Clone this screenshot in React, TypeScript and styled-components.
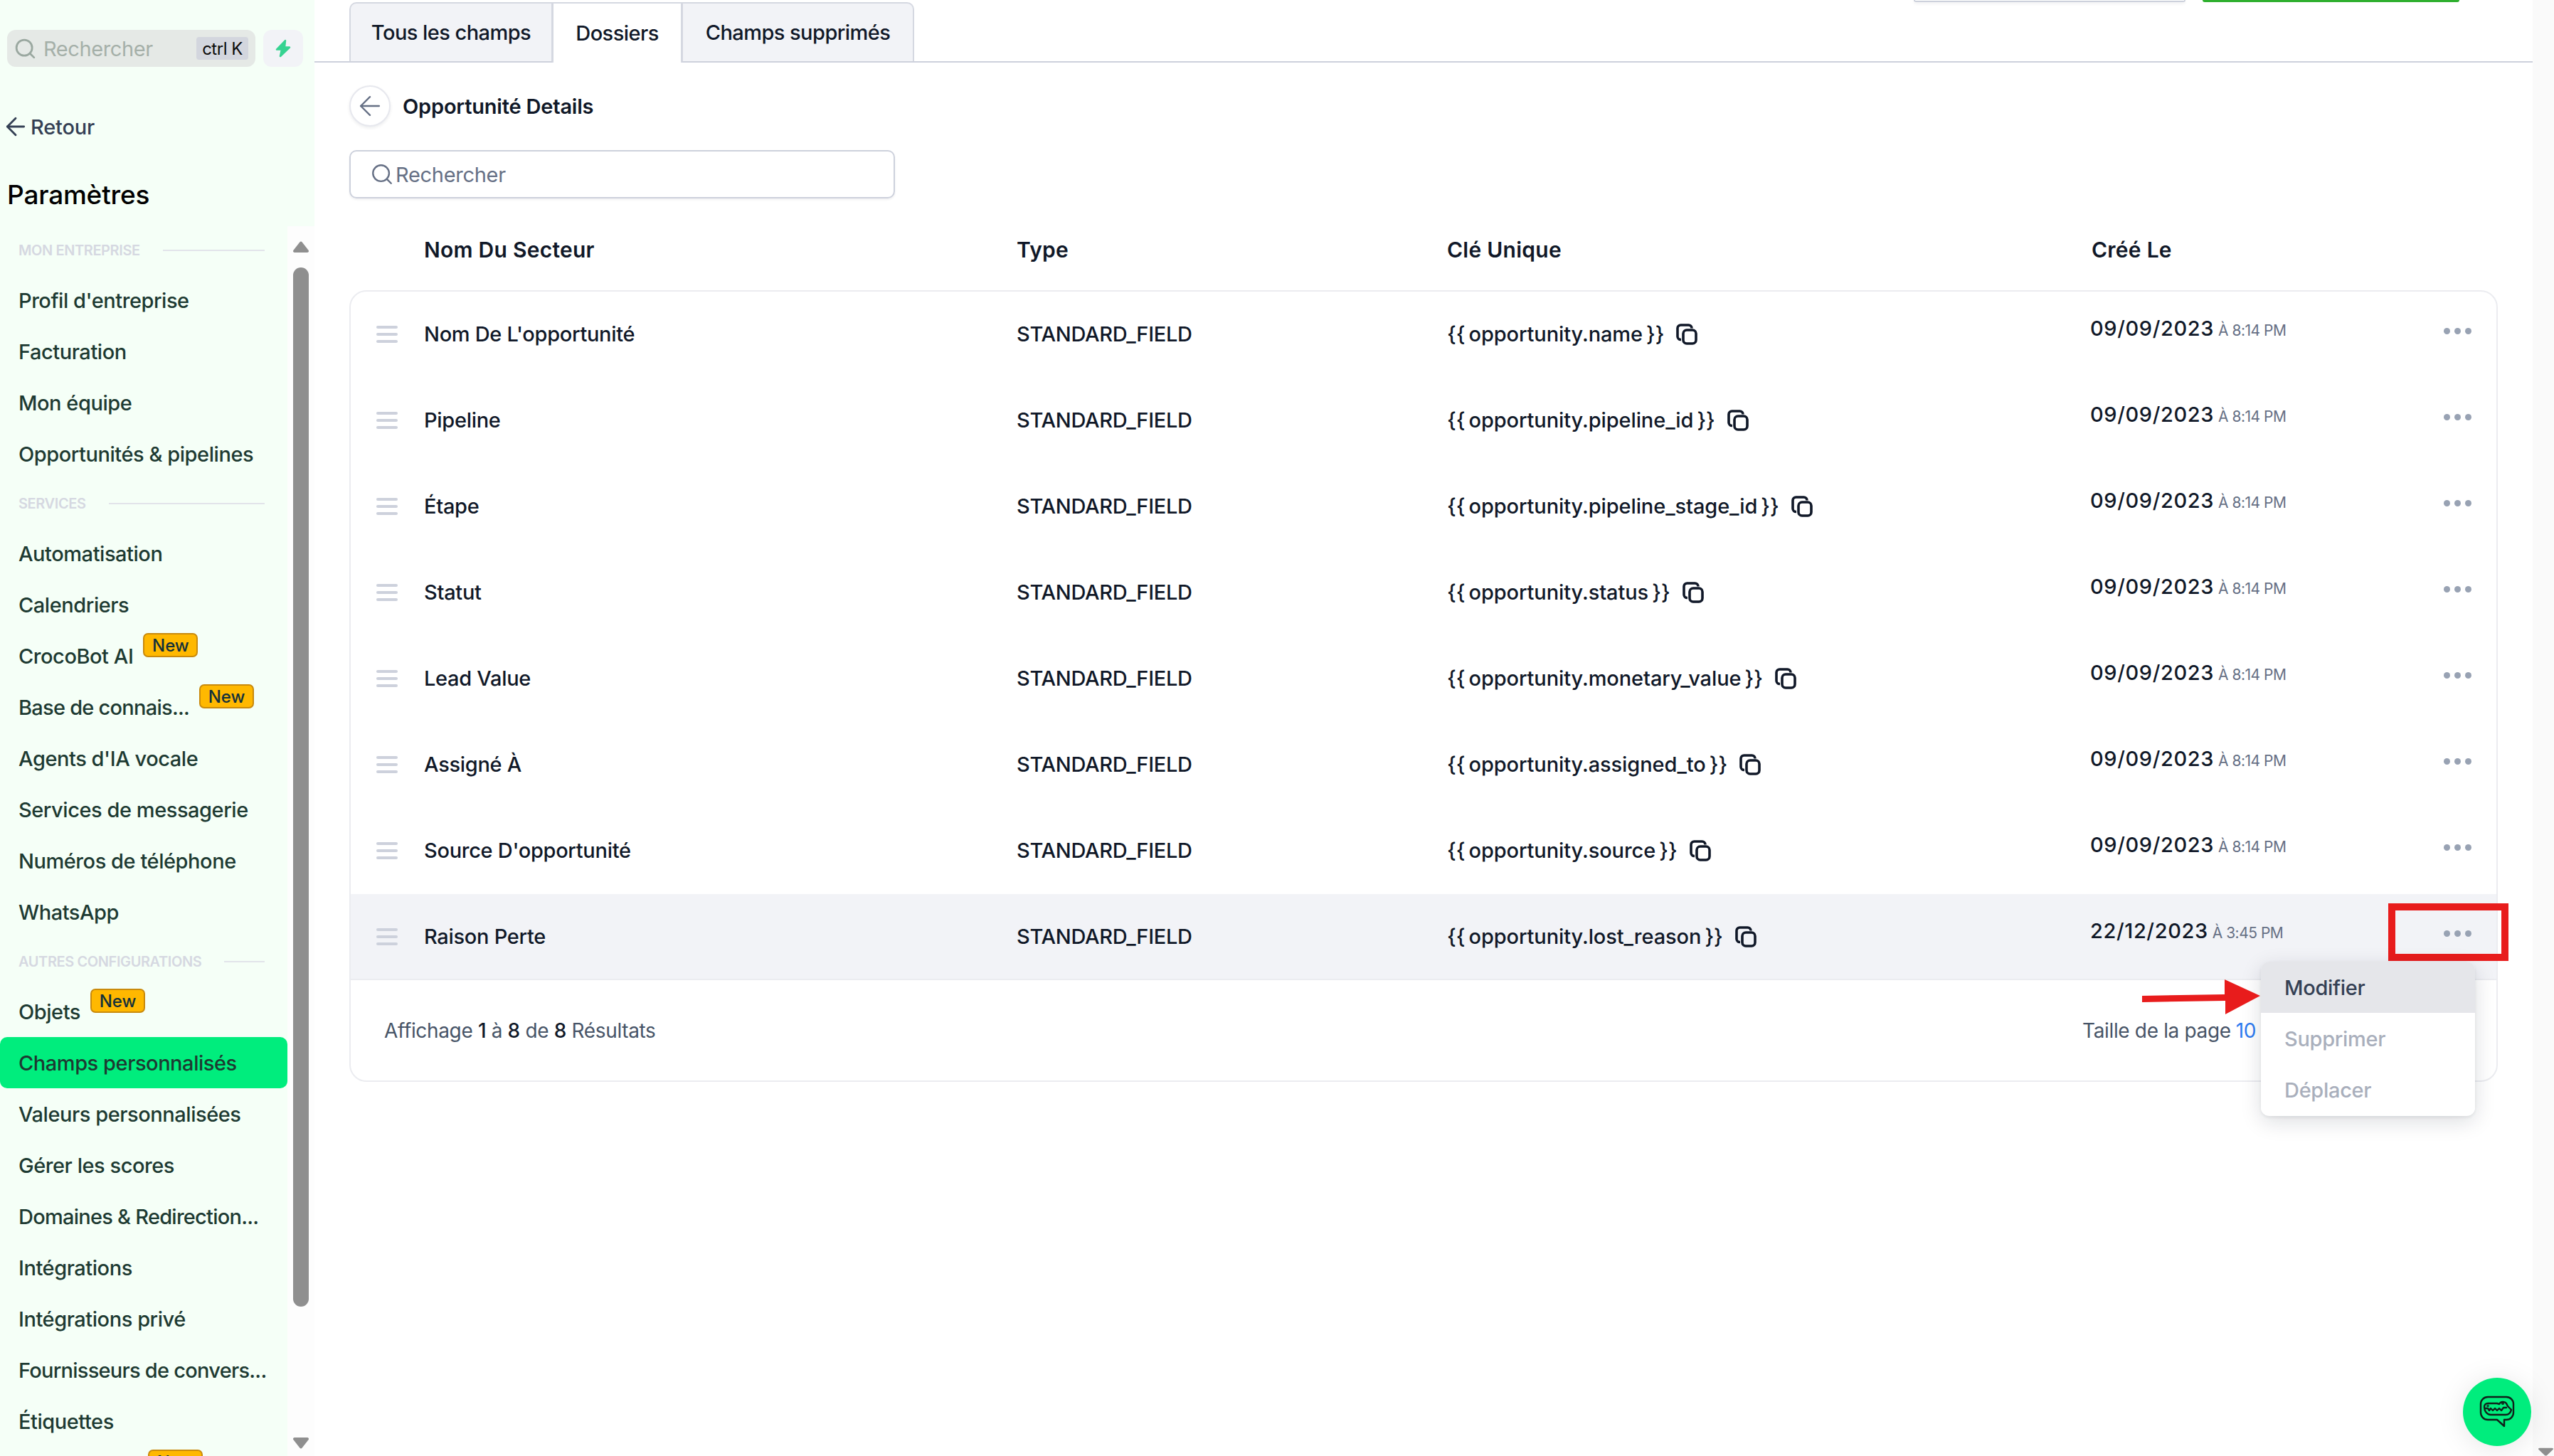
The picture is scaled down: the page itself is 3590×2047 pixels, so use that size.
import React from "react";
import styled, { createGlobalStyle, css } from "styled-components";
import { ArrowLeft, ChevronDown, Search } from "lucide-react";

const FONT = `"Inter", "Noto Sans", sans-serif`;

const GlobalStyle = createGlobalStyle`
  html, body {
    margin: 0;
    padding: 0;
    background: #fff;
    font-family: ${FONT};
  }
  * { box-sizing: border-box; }
`;

const Page = styled.div`
  width: 3590px;
  height: 2047px;
  display: flex;
  overflow: hidden;
  position: relative;
  background: #fff;
`;

const Sidebar = styled.aside`
  width: 442px;
  flex: none;
  height: 100%;
  display: flex;
  flex-direction: column;
  background: #f5fff7;
`;

const SideTop = styled.div`
  height: 318px;
  flex: none;
  padding: 42px 16px 0 10px;
`;

const SearchRow = styled.div`
  display: flex;
  gap: 11px;
`;

const SideSearch = styled.div`
  width: 349px;
  height: 52px;
  display: flex;
  align-items: center;
  padding: 0 10px 0 9px;
  background: #e5e9e6;
  border-radius: 12px;
  color: #a5b0a9;
  font-size: 29px;
`;

const SideSearchLabel = styled.span`
  margin-left: 9px;
  flex: 1;
  letter-spacing: -0.4px;
`;

const Kbd = styled.span`
  width: 73px;
  height: 32px;
  display: flex;
  align-items: center;
  justify-content: center;
  background: #d3d6de;
  border-radius: 4px;
  color: #0b0b0b;
  font-size: 24px;
  letter-spacing: -0.5px;
`;

const BoltButton = styled.div`
  width: 56px;
  height: 52px;
  display: flex;
  align-items: center;
  justify-content: center;
  background: #f2f3f7;
  border-radius: 12px;
`;

const BackLink = styled.div`
  margin: 66px 0 0 -8px;
  height: 36px;
  display: flex;
  align-items: center;
  gap: 1px;
  color: #344054;
  font-size: 29px;
  font-weight: 500;
  letter-spacing: -0.2px;
`;

const SideTitle = styled.h1`
  margin: 54px 0 0;
  height: 48px;
  line-height: 48px;
  font-size: 37px;
  font-weight: 500;
  color: #000;
  letter-spacing: -0.2px;
`;

const NavWrap = styled.div`
  flex: 1;
  min-height: 0;
  display: flex;
`;

const NavList = styled.nav`
  width: 404px;
  flex: none;
  display: flex;
  flex-direction: column;
`;

const SectionLabel = styled.div`
  height: 68px;
  flex: none;
  display: flex;
  align-items: center;
  gap: 32px;
  padding: 0 32px 0 26px;
  color: #d5d8e1;
  font-size: 20px;
  font-weight: 600;
  letter-spacing: -0.4px;
  text-transform: uppercase;
  white-space: nowrap;

  &::after {
    content: "";
    flex: 1;
    height: 2px;
    background: #e2e4ea;
  }
`;

const NavItem = styled.div<{ $active?: boolean }>`
  height: 72px;
  flex: none;
  display: flex;
  align-items: center;
  padding-left: 26px;
  border-radius: 10px;
  color: #1d3a32;
  font-size: 29px;
  font-weight: 500;
  letter-spacing: -0.45px;
  white-space: nowrap;
  background: ${({ $active }) => ($active ? "#00ed7d" : "transparent")};
`;

const NavText = styled.span<{ $tight?: boolean }>`
  letter-spacing: ${({ $tight }) => ($tight ? "-0.75px" : "inherit")};
`;

const NewBadge = styled.span`
  flex: none;
  width: 77px;
  height: 34px;
  margin-left: 14px;
  margin-bottom: 30px;
  display: flex;
  align-items: center;
  justify-content: center;
  background: #ffb800;
  border: 2px solid #c98a0c;
  border-radius: 7px;
  color: #12303a;
  font-size: 24px;
  font-weight: 500;
  letter-spacing: 0;
`;

const Track = styled.div`
  flex: 1;
  display: flex;
  flex-direction: column;
  align-items: center;
  background: #fdfdfd;
  padding: 21px 0 10px;
`;

const Thumb = styled.div`
  width: 22px;
  height: 1461px;
  margin-top: 20px;
  border-radius: 11px;
  background: #8f8f8f;
`;

const Spacer = styled.div`
  flex: 1;
`;

const Main = styled.main`
  flex: 1;
  min-width: 0;
  display: flex;
  flex-direction: column;
`;

const TopBar = styled.div`
  height: 88px;
  flex: none;
  display: flex;
  align-items: flex-start;
  padding-left: 49px;
  border-bottom: 2px solid #cdd1dc;
`;

const Tabs = styled.div`
  display: flex;
  margin-top: 3px;
  height: 85px;
`;

const Tab = styled.div<{ $active?: boolean; $w: number }>`
  width: ${({ $w }) => $w}px;
  height: ${({ $active }) => ($active ? "85px" : "83px")};
  display: flex;
  align-items: center;
  justify-content: center;
  border: 2px solid #d5d8e1;
  border-bottom: none;
  margin-left: ${({ $active }) => ($active ? "-1px" : "0")};
  margin-right: ${({ $active }) => ($active ? "-1px" : "0")};
  position: relative;
  z-index: ${({ $active }) => ($active ? 1 : 0)};
  background: ${({ $active }) => ($active ? "#fff" : "#f2f3f7")};
  color: #101828;
  font-size: 29px;
  font-weight: 500;
  letter-spacing: -0.55px;

  &:first-child {
    border-top-left-radius: 10px;
  }
  &:last-child {
    border-top-right-radius: 10px;
  }
`;

const TopActions = styled.div`
  margin-left: auto;
  margin-right: 103px;
  display: flex;
  gap: 24px;
`;

const GhostEdge = styled.div`
  width: 382px;
  height: 3px;
  background: #fff;
  border: 2px solid #cdd1dc;
  border-top: none;
  border-radius: 0 0 6px 6px;
  box-shadow: 0 2px 4px rgba(16, 24, 40, 0.08);
`;

const GreenEdge = styled.div`
  width: 361px;
  height: 3px;
  background: #2eaf2e;
  border-radius: 0 0 6px 6px;
`;

const Content = styled.div`
  flex: 1;
  padding: 32px 49px 0;
`;

const TitleRow = styled.div`
  display: flex;
  align-items: center;
  gap: 17px;
  height: 58px;
`;

const RoundBack = styled.div`
  width: 58px;
  height: 58px;
  display: flex;
  align-items: center;
  justify-content: center;
  border: 2px solid #e7e8ee;
  border-radius: 50%;
  background: #fff;
  color: #667085;
  box-shadow: 0 2px 4px rgba(16, 24, 40, 0.08);
`;

const PageTitle = styled.div`
  color: #101828;
  font-size: 29px;
  font-weight: 600;
  letter-spacing: -0.2px;
`;

const SearchInput = styled.div`
  width: 767px;
  height: 68px;
  margin-top: 33px;
  display: flex;
  align-items: center;
  gap: 2px;
  padding-left: 27px;
  border: 2px solid #cdd1dc;
  border-radius: 10px;
  color: #667085;
  font-size: 29px;
  box-shadow: 0 2px 3px rgba(16, 24, 40, 0.06);
  letter-spacing: -0.3px;
`;

const columns = css`
  display: grid;
  grid-template-columns: 103px 833px 605px 906px 495px 75px;
  align-items: center;
`;

const HeadRow = styled.div`
  ${columns}
  height: 68px;
  margin: 38px 2px 23px;
  color: #101828;
  font-size: 30px;
  font-weight: 600;
  letter-spacing: 0.25px;
`;

const Card = styled.div`
  width: 3020px;
  height: 1113px;
  border: 2px solid #ebecf0;
  border-radius: 24px;
`;

const Row = styled.div<{ $selected?: boolean }>`
  ${columns}
  position: relative;
  height: 121px;
  color: #101828;
  font-size: 29px;
  font-weight: 500;
  letter-spacing: -0.3px;
  background: ${({ $selected }) => ($selected ? "#f2f3f7" : "transparent")};
  border-bottom: 2px solid ${({ $selected }) => ($selected ? "#ebecf0" : "transparent")};
`;

const DragCell = styled.div`
  padding-left: 36px;
  display: flex;
`;

const DragHandle = styled.div`
  width: 30px;
  height: 24px;
  display: flex;
  flex-direction: column;
  justify-content: space-between;

  span {
    height: 4px;
    border-radius: 2px;
    background: #cdd1dc;
  }
`;

const KeyCell = styled.div`
  display: flex;
  align-items: center;
  gap: 17px;
  letter-spacing: -0.1px;
  word-spacing: -2.5px;
`;

const DateCell = styled.div`
  display: flex;
  align-items: baseline;
  gap: 6px;
  margin-top: -16px;
  margin-left: -2px;
  letter-spacing: 0.6px;
`;

const TimeText = styled.span`
  color: #667085;
  font-size: 21px;
  font-weight: 400;
  letter-spacing: -0.5px;
`;

const Dots = styled.div`
  display: flex;
  gap: 6px;
  margin-top: -8px;

  span {
    width: 9px;
    height: 9px;
    border-radius: 50%;
    background: #98a2b3;
  }
`;

const Footer = styled.div`
  height: 140px;
  display: flex;
  align-items: center;
  justify-content: space-between;
  padding: 2px 0 0 47px;
  color: #475467;
  font-size: 28px;
  letter-spacing: -0.35px;

  b {
    color: #101828;
    font-weight: 500;
  }
`;

const PageSize = styled.div`
  width: 582px;
  display: flex;
  align-items: center;
  gap: 7px;
`;

const PageSizeValue = styled.span`
  color: #2e7bf0;
`;

const RedBox = styled.div`
  position: absolute;
  left: 2864px;
  top: 13px;
  width: 169px;
  height: 81px;
  border: 10px solid #e81c1c;
  z-index: 2;
`;

const ArrowMark = styled.svg`
  position: absolute;
  left: 2516px;
  top: 118px;
  z-index: 3;
`;

const Menu = styled.div`
  position: absolute;
  left: 2685px;
  top: 95px;
  width: 301px;
  height: 217px;
  background: #fff;
  border-radius: 12px;
  overflow: hidden;
  box-shadow: 0 8px 30px rgba(16, 24, 40, 0.14), 0 2px 4px rgba(16, 24, 40, 0.08);
  z-index: 2;
`;

const MenuItem = styled.div<{ $active?: boolean }>`
  height: 72px;
  display: flex;
  align-items: center;
  padding-left: 33px;
  font-size: 29px;
  font-weight: 500;
  color: ${({ $active }) => ($active ? "#344054" : "#a9afbc")};
  background: ${({ $active }) => ($active ? "#e5e6ea" : "#fff")};
`;

const PageScroll = styled.div`
  width: 30px;
  flex: none;
  height: 100%;
  display: flex;
  flex-direction: column;
  justify-content: flex-end;
  align-items: flex-end;
  background: #fafafa;
`;

const ChatButton = styled.div`
  position: absolute;
  left: 3462px;
  top: 1937px;
  width: 96px;
  height: 96px;
  display: flex;
  align-items: center;
  justify-content: center;
  border-radius: 50%;
  background: #00ed7d;
  box-shadow: 0 4px 40px rgba(0, 0, 0, 0.1);
`;

const ScrollArrow = ({ down, width = 24, height = 17 }: { down?: boolean; width?: number; height?: number }) => (
  <svg width={width} height={height} viewBox="0 0 24 17" preserveAspectRatio="none">
    <path
      d={down ? "M3 1h18a2 2 0 0 1 1.7 3L13.7 15.5a2 2 0 0 1-3.4 0L1.3 4A2 2 0 0 1 3 1z" : "M3 16h18a2 2 0 0 0 1.7-3L13.7 1.5a2 2 0 0 0-3.4 0L1.3 13A2 2 0 0 0 3 16z"}
      fill="#8f8f8f"
    />
  </svg>
);

const CopyGlyph = () => (
  <svg width="30" height="30" viewBox="0 0 30 30" fill="none" stroke="#101828" strokeWidth="3.6">
    <rect x="10" y="9" width="18" height="19" rx="5" />
    <path d="M7 22.500H6.500a4.500 4.500 0 0 1-4.500-4.500V6.500A4.500 4.500 0 0 1 6.500 2H17.500A4.500 4.500 0 0 1 22 6.500" />
  </svg>
);

const CrocBubble = () => (
  <svg width="50" height="46" viewBox="0 0 50 46" fill="none" stroke="#10201a" strokeWidth="2.4" strokeLinecap="round" strokeLinejoin="round">
    <path d="M12 2h26a10 10 0 0 1 10 10v12a10 10 0 0 1-10 10h-3v9l-10-9H12A10 10 0 0 1 2 24V12A10 10 0 0 1 12 2z" />
    <path d="M7 16c0-3 2-5 5-5h13l3 1c2-4 8-4 10-1l2 4 5 5c-1 4-4 7-8 7H16c-5 0-9-5-9-11z" />
    <path d="M9 18h3l2 3 2-3 3 3 3-3 3 3 3-3 3 3 3-4h4" />
    <circle cx="12" cy="14.500" r="0.600" />
    <circle cx="33" cy="11" r="0.800" />
  </svg>
);

type NavEntry =
  | { kind: "label"; text: string }
  | { kind: "item"; text: string; isNew?: boolean; active?: boolean; tight?: boolean };

const NAV: NavEntry[] = [
  { kind: "label", text: "Mon entreprise" },
  { kind: "item", text: "Profil d'entreprise" },
  { kind: "item", text: "Facturation" },
  { kind: "item", text: "Mon équipe" },
  { kind: "item", text: "Opportunités & pipelines" },
  { kind: "label", text: "Services" },
  { kind: "item", text: "Automatisation" },
  { kind: "item", text: "Calendriers" },
  { kind: "item", text: "CrocoBot AI", isNew: true },
  { kind: "item", text: "Base de connais...", isNew: true, tight: true },
  { kind: "item", text: "Agents d'IA vocale" },
  { kind: "item", text: "Services de messagerie" },
  { kind: "item", text: "Numéros de téléphone" },
  { kind: "item", text: "WhatsApp" },
  { kind: "label", text: "Autres configurations" },
  { kind: "item", text: "Objets", isNew: true },
  { kind: "item", text: "Champs personnalisés", active: true },
  { kind: "item", text: "Valeurs personnalisées" },
  { kind: "item", text: "Gérer les scores" },
  { kind: "item", text: "Domaines & Redirection...", tight: true },
  { kind: "item", text: "Intégrations" },
  { kind: "item", text: "Intégrations privé" },
  { kind: "item", text: "Fournisseurs de convers...", tight: true },
  { kind: "item", text: "Étiquettes" },
  { kind: "item", text: "Laboratoires", isNew: true },
];

const FIELDS = [
  { name: "Nom De L'opportunité", key: "{{ opportunity.name }}", date: "09/09/2023", time: "À 8:14 PM" },
  { name: "Pipeline", key: "{{ opportunity.pipeline_id }}", date: "09/09/2023", time: "À 8:14 PM" },
  { name: "Étape", key: "{{ opportunity.pipeline_stage_id }}", date: "09/09/2023", time: "À 8:14 PM" },
  { name: "Statut", key: "{{ opportunity.status }}", date: "09/09/2023", time: "À 8:14 PM" },
  { name: "Lead Value", key: "{{ opportunity.monetary_value }}", date: "09/09/2023", time: "À 8:14 PM" },
  { name: "Assigné À", key: "{{ opportunity.assigned_to }}", date: "09/09/2023", time: "À 8:14 PM" },
  { name: "Source D'opportunité", key: "{{ opportunity.source }}", date: "09/09/2023", time: "À 8:14 PM" },
  { name: "Raison Perte", key: "{{ opportunity.lost_reason }}", date: "22/12/2023", time: "À 3:45 PM" },
];

const App: React.FC = () => {
  return (
    <Page>
      <GlobalStyle />
      <Sidebar>
        <SideTop>
          <SearchRow>
            <SideSearch>
              <Search size={33} color="#9aa8a0" strokeWidth={2} />
              <SideSearchLabel>Rechercher</SideSearchLabel>
              <Kbd>ctrl K</Kbd>
            </SideSearch>
            <BoltButton>
              <svg width="24" height="26" viewBox="0 0 24 26">
                <path d="M15 2 3 14.500h7L8 24l13-12.500h-7z" fill="#36d391" stroke="#36d391" strokeWidth="2.500" strokeLinejoin="round" />
              </svg>
            </BoltButton>
          </SearchRow>
          <BackLink>
            <ArrowLeft size={40} strokeWidth={1.7} />
            Retour
          </BackLink>
          <SideTitle>Paramètres</SideTitle>
        </SideTop>
        <NavWrap>
          <NavList>
            {NAV.map((entry) =>
              entry.kind === "label" ? (
                <SectionLabel key={entry.text}>{entry.text}</SectionLabel>
              ) : (
                <NavItem key={entry.text} $active={entry.active}>
                  <NavText $tight={entry.tight}>{entry.text}</NavText>
                  {entry.isNew && <NewBadge>New</NewBadge>}
                </NavItem>
              )
            )}
          </NavList>
          <Track>
            <ScrollArrow />
            <Thumb />
            <Spacer />
            <ScrollArrow down />
          </Track>
        </NavWrap>
      </Sidebar>

      <Main>
        <TopBar>
          <Tabs>
            <Tab $w={286}>Tous les champs</Tab>
            <Tab $w={183} $active>
              Dossiers
            </Tab>
            <Tab $w={327}>Champs supprimés</Tab>
          </Tabs>
          <TopActions>
            <GhostEdge />
            <GreenEdge />
          </TopActions>
        </TopBar>
        <Content>
          <TitleRow>
            <RoundBack>
              <ArrowLeft size={44} strokeWidth={1.3} />
            </RoundBack>
            <PageTitle>Opportunité Details</PageTitle>
          </TitleRow>
          <SearchInput>
            <Search size={34} strokeWidth={1.7} />
            Rechercher
          </SearchInput>
          <HeadRow>
            <span />
            <span>Nom Du Secteur</span>
            <span>Type</span>
            <span>Clé Unique</span>
            <span>Créé Le</span>
            <span />
          </HeadRow>
          <Card>
            {FIELDS.map((field, idx) => {
              const selected = idx === FIELDS.length - 1;
              return (
                <Row key={field.name} $selected={selected}>
                  <DragCell>
                    <DragHandle>
                      <span />
                      <span />
                      <span />
                    </DragHandle>
                  </DragCell>
                  <span>{field.name}</span>
                  <span>STANDARD_FIELD</span>
                  <KeyCell>
                    {field.key}
                    <CopyGlyph />
                  </KeyCell>
                  <DateCell>
                    {field.date}
                    <TimeText>{field.time}</TimeText>
                  </DateCell>
                  <Dots>
                    <span />
                    <span />
                    <span />
                  </Dots>
                  {selected && (
                    <>
                      <RedBox />
                      <ArrowMark width="170" height="52" viewBox="0 0 170 52">
                        <path d="M2 25 118 23V2l50 23-49 26V32L2 34z" fill="#e81c1c" />
                      </ArrowMark>
                      <Menu>
                        <MenuItem $active>Modifier</MenuItem>
                        <MenuItem>Supprimer</MenuItem>
                        <MenuItem>Déplacer</MenuItem>
                      </Menu>
                    </>
                  )}
                </Row>
              );
            })}
            <Footer>
              <span>
                Affichage <b>1</b> à <b>8</b> de <b>8</b> Résultats
              </span>
              <PageSize>
                Taille de la page <PageSizeValue>10</PageSizeValue>
                <ChevronDown size={22} color="#475467" />
              </PageSize>
            </Footer>
          </Card>
        </Content>
      </Main>

      <PageScroll>
        <ScrollArrow down width={23} height={12} />
      </PageScroll>

      <ChatButton>
        <CrocBubble />
      </ChatButton>
    </Page>
  );
};

export default App;
